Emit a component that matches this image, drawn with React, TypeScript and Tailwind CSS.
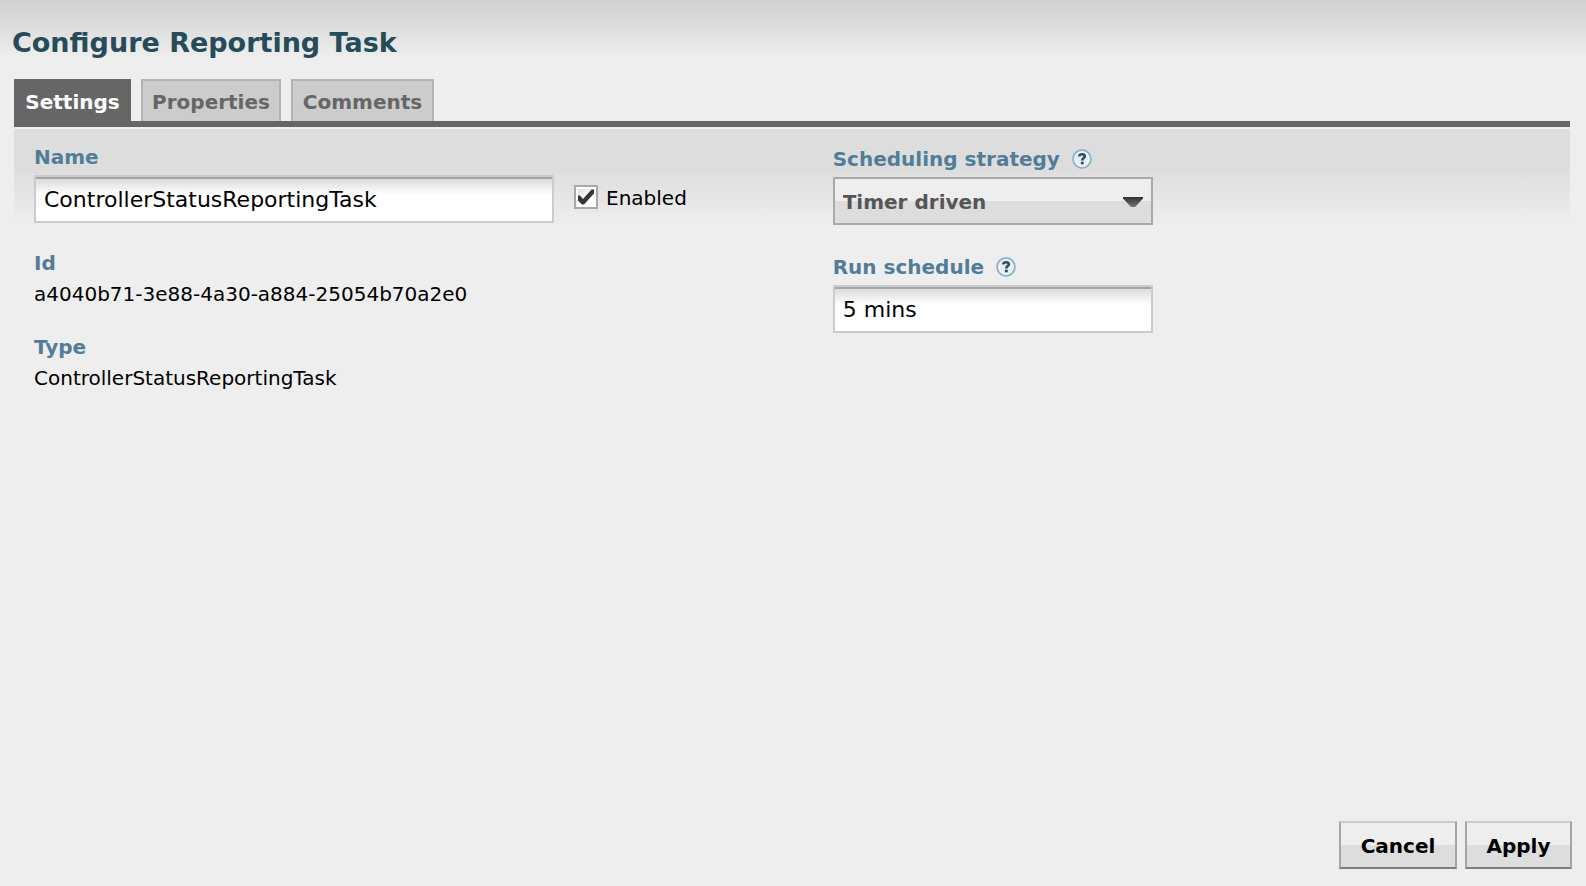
import { useState, type ReactNode } from 'react';

const labelClass = 'text-[20px] leading-[26px] font-bold text-[#527d98]';
const inputClass =
  'h-12 border-2 border-[#cbcbcb] bg-white bg-[linear-gradient(to_bottom,#a5a5a5_0px,#a5a5a5_2px,#dcdcdc_2px,#ffffff_18px)] px-2 text-[22px] text-black outline-none';
const buttonClass =
  'h-12 border-2 border-t-[#cbcbcb] border-x-[#a5a5a5] border-b-[#7f7f7f] bg-[linear-gradient(to_bottom,#eeeeee_50%,#dddddd_50%)] pt-0.5 text-[20px] font-bold text-black';

function HelpIcon() {
  return (
    <svg width="20" height="20" viewBox="0 0 20 20" aria-hidden="true">
      <circle cx="10" cy="10" r="8.8" fill="#e3eef4" stroke="#94b6c9" strokeWidth="2.2" />
      <circle cx="10" cy="10" r="7.1" fill="none" stroke="#f4fafc" strokeWidth="1.2" />
      <path
        d="M7.1 7.4C7.3 5.7 8.5 5.2 10.1 5.2C11.8 5.2 12.8 6 12.8 7.3C12.8 9.2 10.3 9 10.3 11.4"
        fill="none"
        stroke="#2f4f5e"
        strokeWidth="2.6"
      />
      <rect x="8.9" y="12.7" width="2.8" height="2.6" fill="#2f4f5e" />
    </svg>
  );
}

function HelpLabel({ htmlFor, children }: { htmlFor: string; children: ReactNode }) {
  return (
    <div className="flex items-center gap-3">
      <label htmlFor={htmlFor} className={labelClass}>
        {children}
      </label>
      <HelpIcon />
    </div>
  );
}

const tabs = [
  { name: 'Settings', width: 'w-[117px]' },
  { name: 'Properties', width: 'w-[140px]' },
  { name: 'Comments', width: 'w-[143px]' },
];

export default function App() {
  const [name, setName] = useState('ControllerStatusReportingTask');
  const [enabled, setEnabled] = useState(true);
  const [schedule, setSchedule] = useState('5 mins');
  const [active, setActive] = useState('Settings');

  return (
    <div className="flex min-h-screen flex-col bg-[#eeeeee] bg-[linear-gradient(to_bottom,#d0d0d0_0px,#eeeeee_58px)] pr-4 pb-[17px] pl-3.5 font-['Verdana','DejaVu_Sans',sans-serif] text-black">
      <h1 className="-ml-0.5 pt-[23px] text-[27px] leading-10 font-bold text-[#264c5a]">Configure Reporting Task</h1>

      <div role="tablist" className="mt-4 flex gap-2.5 border-b-6 border-[#666666]">
        {tabs.map((tab) => (
          <button
            key={tab.name}
            type="button"
            role="tab"
            aria-selected={active === tab.name}
            onClick={() => setActive(tab.name)}
            className={`${tab.width} h-[42px] border-2 border-b-0 pt-0.5 text-[20px] font-bold whitespace-nowrap ${
              active === tab.name
                ? 'border-[#666666] bg-[#666666] text-white'
                : 'border-[#b3b3b3] bg-[#cccccc] text-[#666666]'
            }`}
          >
            {tab.name}
          </button>
        ))}
      </div>

      <main className="mt-0.5 grid grid-cols-[52%_1fr] bg-[linear-gradient(to_bottom,#dddddd_38px,#eeeeee_96px)] pl-5">
        <section className="flex flex-col pt-[15px]">
          <label htmlFor="task-name" className={labelClass}>
            Name
          </label>
          <div className="mt-[5px] flex items-center gap-5">
            <input
              id="task-name"
              type="text"
              value={name}
              onChange={(e) => setName(e.target.value)}
              className={`${inputClass} w-[520px]`}
            />
            <div className="flex items-center gap-2 pb-1">
              <span className="relative flex">
                <input
                  id="enabled"
                  type="checkbox"
                  checked={enabled}
                  onChange={(e) => setEnabled(e.target.checked)}
                  className="size-6 appearance-none border-2 border-[#a9a9a9] bg-[linear-gradient(135deg,#d8d8d8,#ffffff_60%)] ring-2 ring-white ring-inset"
                />
                {enabled && (
                  <svg className="pointer-events-none absolute inset-0" width="24" height="24" viewBox="0 0 24 24" aria-hidden="true">
                    <path d="M4 10.5H6L9 14L17.5 4.5H20V8.5L10 19.5H8L4 15.5Z" fill="#353535" />
                  </svg>
                )}
              </span>
              <label htmlFor="enabled" className="pt-0.5 text-[20px] leading-7">
                Enabled
              </label>
            </div>
          </div>

          <div className="mt-[27px]">
            <div className={labelClass}>Id</div>
            <div className="mt-[5px] text-[20px] leading-[26px]">a4040b71-3e88-4a30-a884-25054b70a2e0</div>
          </div>

          <div className="mt-[27px]">
            <div className={labelClass}>Type</div>
            <div className="mt-[5px] text-[20px] leading-[26px]">ControllerStatusReportingTask</div>
          </div>
        </section>

        <section className="flex flex-col pt-[17px]">
          <HelpLabel htmlFor="strategy">Scheduling strategy</HelpLabel>
          <div className="relative mt-[5px] w-80">
            <select
              id="strategy"
              className="h-12 w-full appearance-none border-2 border-[#a9a9a9] bg-[linear-gradient(to_bottom,#eeeeee_50%,#dddddd_50%)] px-2 pt-0.5 text-[20px] font-bold text-[#555555] outline-none"
            >
              <option>Timer driven</option>
              <option>Cron driven</option>
            </select>
            <svg className="pointer-events-none absolute top-5 right-2.5" width="20" height="10" viewBox="0 0 20 10" aria-hidden="true">
              <defs>
                <linearGradient id="arrow" x1="0" y1="0" x2="0" y2="1">
                  <stop offset="0" stopColor="#303030" />
                  <stop offset="1" stopColor="#777777" />
                </linearGradient>
              </defs>
              <path d="M0 0H20V1.5L12 10H8L0 1.5Z" fill="url(#arrow)" />
            </svg>
          </div>

          <div className="mt-[29px] flex flex-col">
            <HelpLabel htmlFor="run-schedule">Run schedule</HelpLabel>
            <input
              id="run-schedule"
              type="text"
              value={schedule}
              onChange={(e) => setSchedule(e.target.value)}
              className={`${inputClass} mt-[5px] w-80`}
            />
          </div>
        </section>
      </main>

      <footer className="mt-auto -mr-0.5 flex justify-end gap-2">
        <button type="button" className={`${buttonClass} w-[118px]`}>
          Cancel
        </button>
        <button type="button" className={`${buttonClass} w-[107px]`}>
          Apply
        </button>
      </footer>
    </div>
  );
}
